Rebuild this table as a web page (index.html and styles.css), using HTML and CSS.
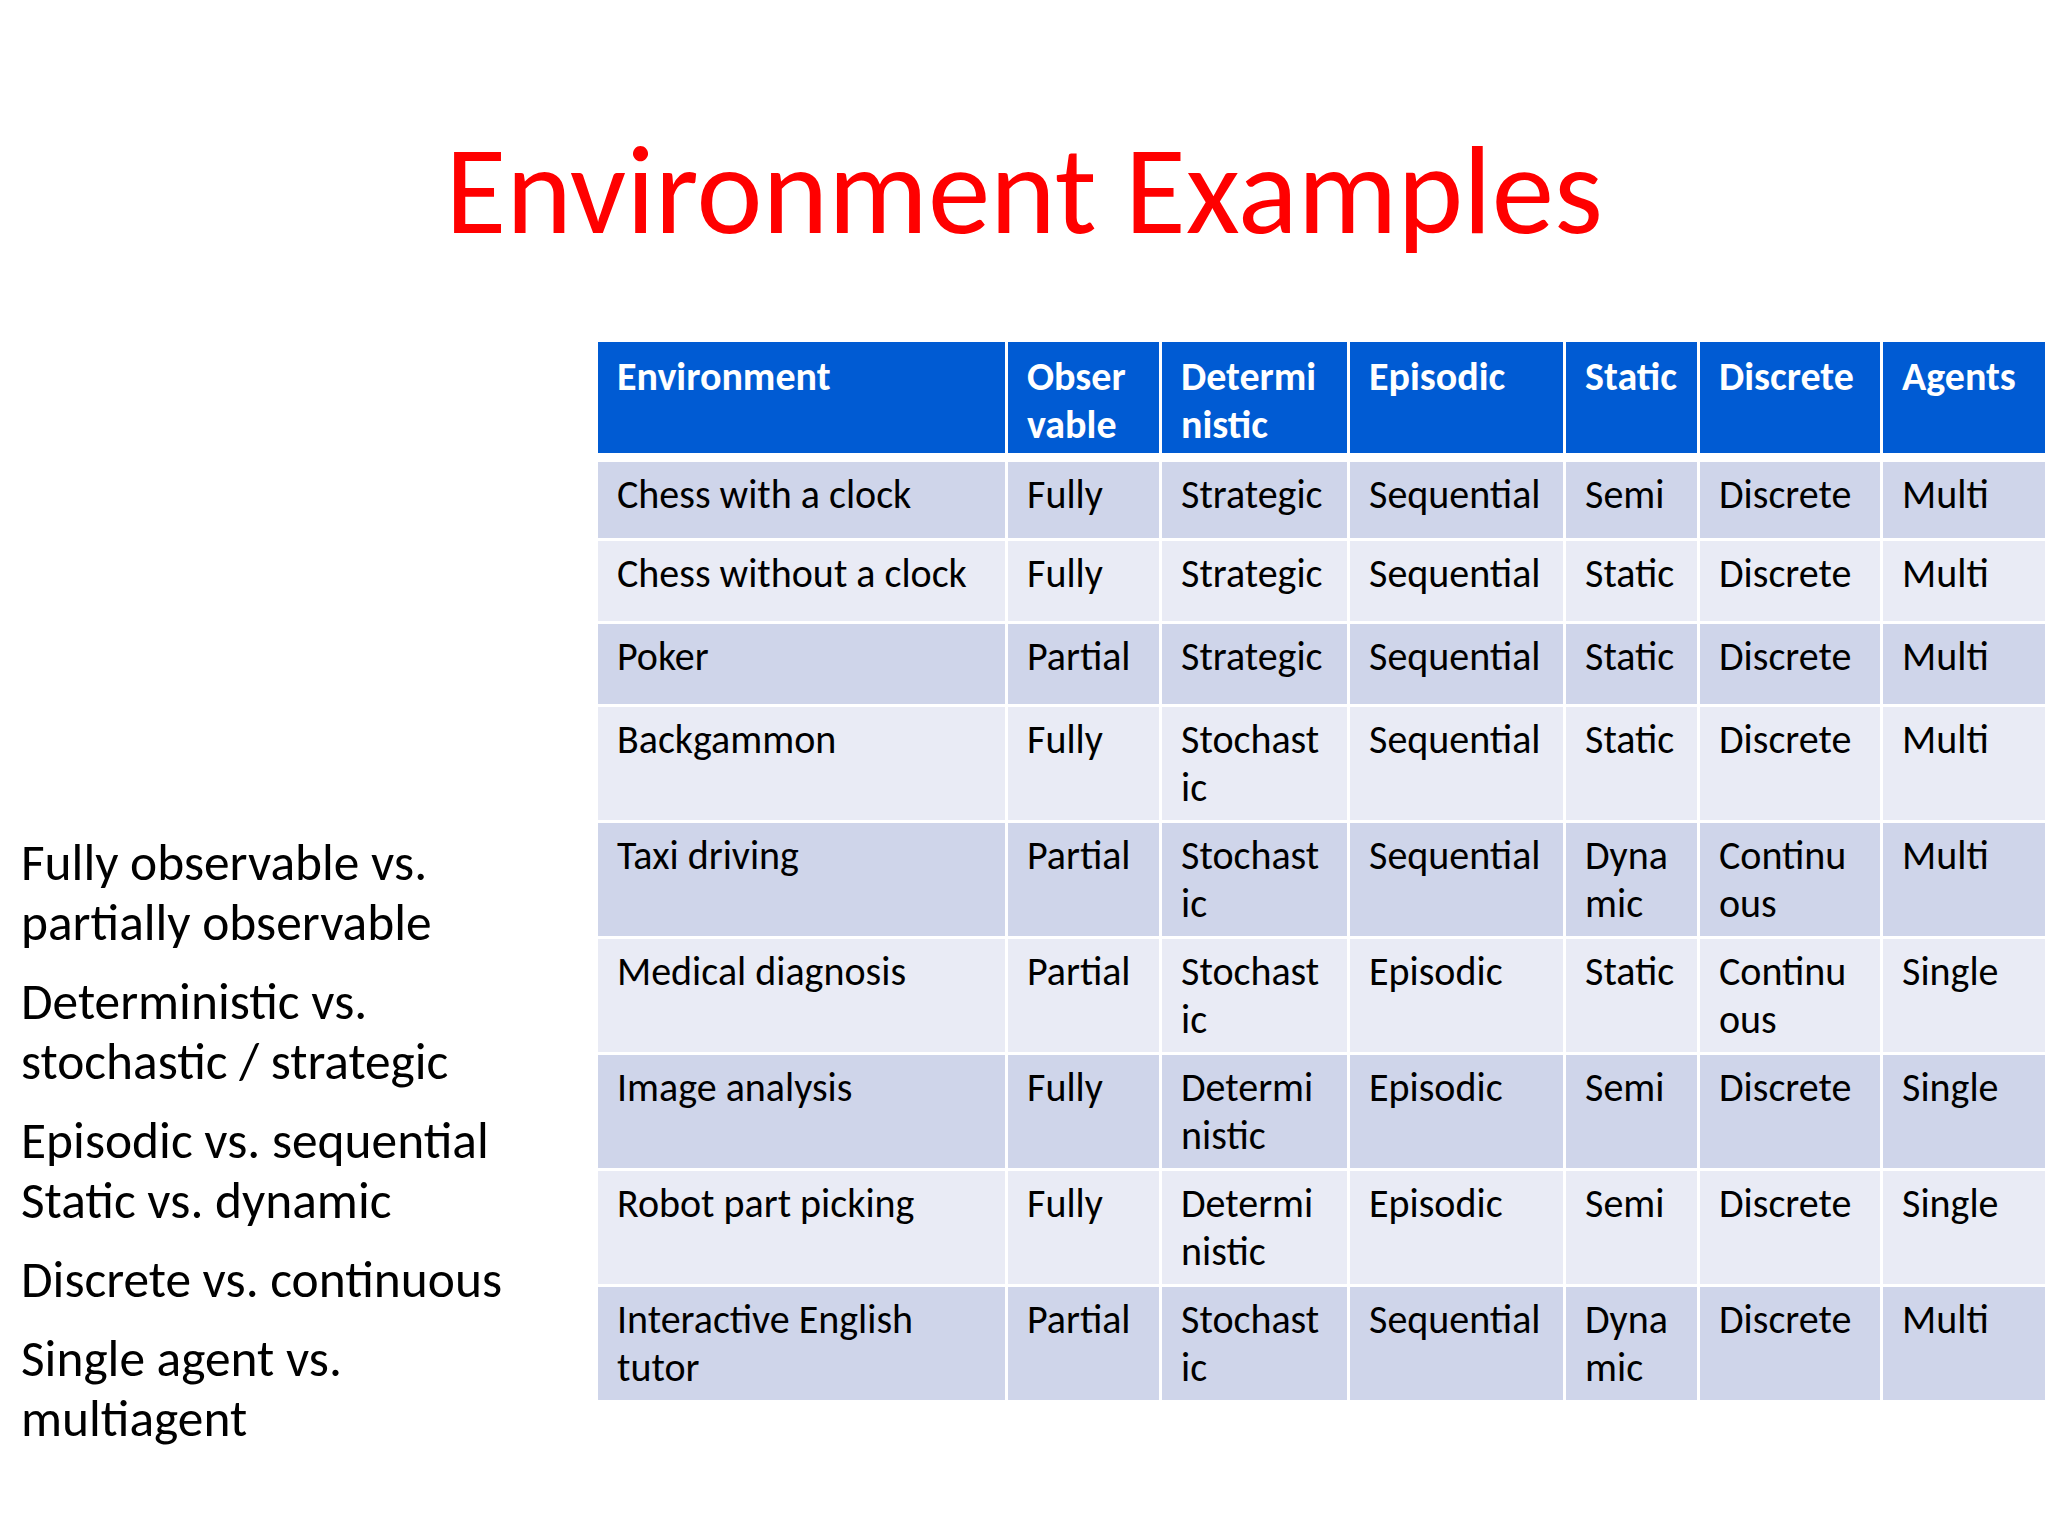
FILE: index.html
```html
<!DOCTYPE html>
<html lang="en">
<head>
<meta charset="utf-8">
<title>Environment Examples</title>
<link rel="stylesheet" href="styles.css">
</head>
<body>
<main class="slide">
  <h1 class="title">Environment Examples</h1>
  <div class="content">
    <div class="notes">
      <p>Fully observable vs.<br>partially observable</p>
      <p>Deterministic vs.<br>stochastic / strategic</p>
      <p>Episodic vs. sequential<br>Static vs. dynamic</p>
      <p>Discrete vs. continuous</p>
      <p>Single agent vs.<br>multiagent</p>
    </div>
    <table class="env">
      <colgroup>
        <col class="c1"><col class="c2"><col class="c3"><col class="c4"><col class="c5"><col class="c6"><col class="c7">
      </colgroup>
      <thead>
        <tr>
          <th>Environment</th><th>Obser<br>vable</th><th>Determi<br>nistic</th><th>Episodic</th><th>Static</th><th>Discrete</th><th>Agents</th>
        </tr>
      </thead>
      <tbody>
        <tr class="odd first">
          <td>Chess with a clock</td><td>Fully</td><td>Strategic</td><td>Sequential</td><td>Semi</td><td>Discrete</td><td>Multi</td>
        </tr>
        <tr class="even">
          <td>Chess without a clock</td><td>Fully</td><td>Strategic</td><td>Sequential</td><td>Static</td><td>Discrete</td><td>Multi</td>
        </tr>
        <tr class="odd">
          <td>Poker</td><td>Partial</td><td>Strategic</td><td>Sequential</td><td>Static</td><td>Discrete</td><td>Multi</td>
        </tr>
        <tr class="even">
          <td>Backgammon</td><td>Fully</td><td>Stochast<br>ic</td><td>Sequential</td><td>Static</td><td>Discrete</td><td>Multi</td>
        </tr>
        <tr class="odd">
          <td>Taxi driving</td><td>Partial</td><td>Stochast<br>ic</td><td>Sequential</td><td>Dyna<br>mic</td><td>Continu<br>ous</td><td>Multi</td>
        </tr>
        <tr class="even">
          <td>Medical diagnosis</td><td>Partial</td><td>Stochast<br>ic</td><td>Episodic</td><td>Static</td><td>Continu<br>ous</td><td>Single</td>
        </tr>
        <tr class="odd">
          <td>Image analysis</td><td>Fully</td><td>Determi<br>nistic</td><td>Episodic</td><td>Semi</td><td>Discrete</td><td>Single</td>
        </tr>
        <tr class="even">
          <td>Robot part picking</td><td>Fully</td><td>Determi<br>nistic</td><td>Episodic</td><td>Semi</td><td>Discrete</td><td>Single</td>
        </tr>
        <tr class="odd">
          <td>Interactive English<br>tutor</td><td>Partial</td><td>Stochast<br>ic</td><td>Sequential</td><td>Dyna<br>mic</td><td>Discrete</td><td>Multi</td>
        </tr>
      </tbody>
    </table>
  </div>
</main>
</body>
</html>
```

FILE: styles.css
```css
html, body {
  margin: 0;
  padding: 0;
  background: #ffffff;
}

.slide {
  width: 2048px;
  height: 1536px;
  overflow: hidden;
  font-family: Carlito, Calibri, "Liberation Sans", sans-serif;
  color: #000000;
}

.title {
  margin: 0;
  padding-top: 116px;
  font-size: 125px;
  line-height: 150px;
  font-weight: normal;
  color: #ff0000;
  text-align: center;
}

.content {
  display: flex;
  align-items: flex-start;
  margin-top: 73px;
}

.notes {
  flex: 0 0 595px;
  box-sizing: border-box;
  padding: 494px 0 0 21px;
  font-size: 51.4px;
  line-height: 60px;
  white-space: nowrap;
}

.notes p {
  margin: 0 0 19px 0;
}

.env {
  border-collapse: separate;
  border-spacing: 3px;
  table-layout: fixed;
  width: 1453px;
  font-size: 40px;
  line-height: 48px;
}

.env .c1 { width: 407px; }
.env .c2 { width: 151px; }
.env .c3 { width: 185px; }
.env .c4 { width: 213px; }
.env .c5 { width: 131px; }
.env .c6 { width: 180px; }
.env .c7 { width: 162px; }

.env th,
.env td {
  box-sizing: border-box;
  text-align: left;
  vertical-align: top;
  white-space: nowrap;
  overflow: hidden;
  padding: 9px 4px 8px 19px;
}

.env th {
  height: 111px;
  padding-top: 11px;
  padding-bottom: 4px;
  background: #005bd3;
  color: #ffffff;
  font-weight: bold;
}

.env tbody tr {
  height: 80px;
}

.env tr.odd td {
  background: #cfd5ea;
}

.env tr.even td {
  background: #e9ebf5;
}

.env tr.first td {
  border-top: 6px solid #ffffff;
  height: 82px;
}
```
